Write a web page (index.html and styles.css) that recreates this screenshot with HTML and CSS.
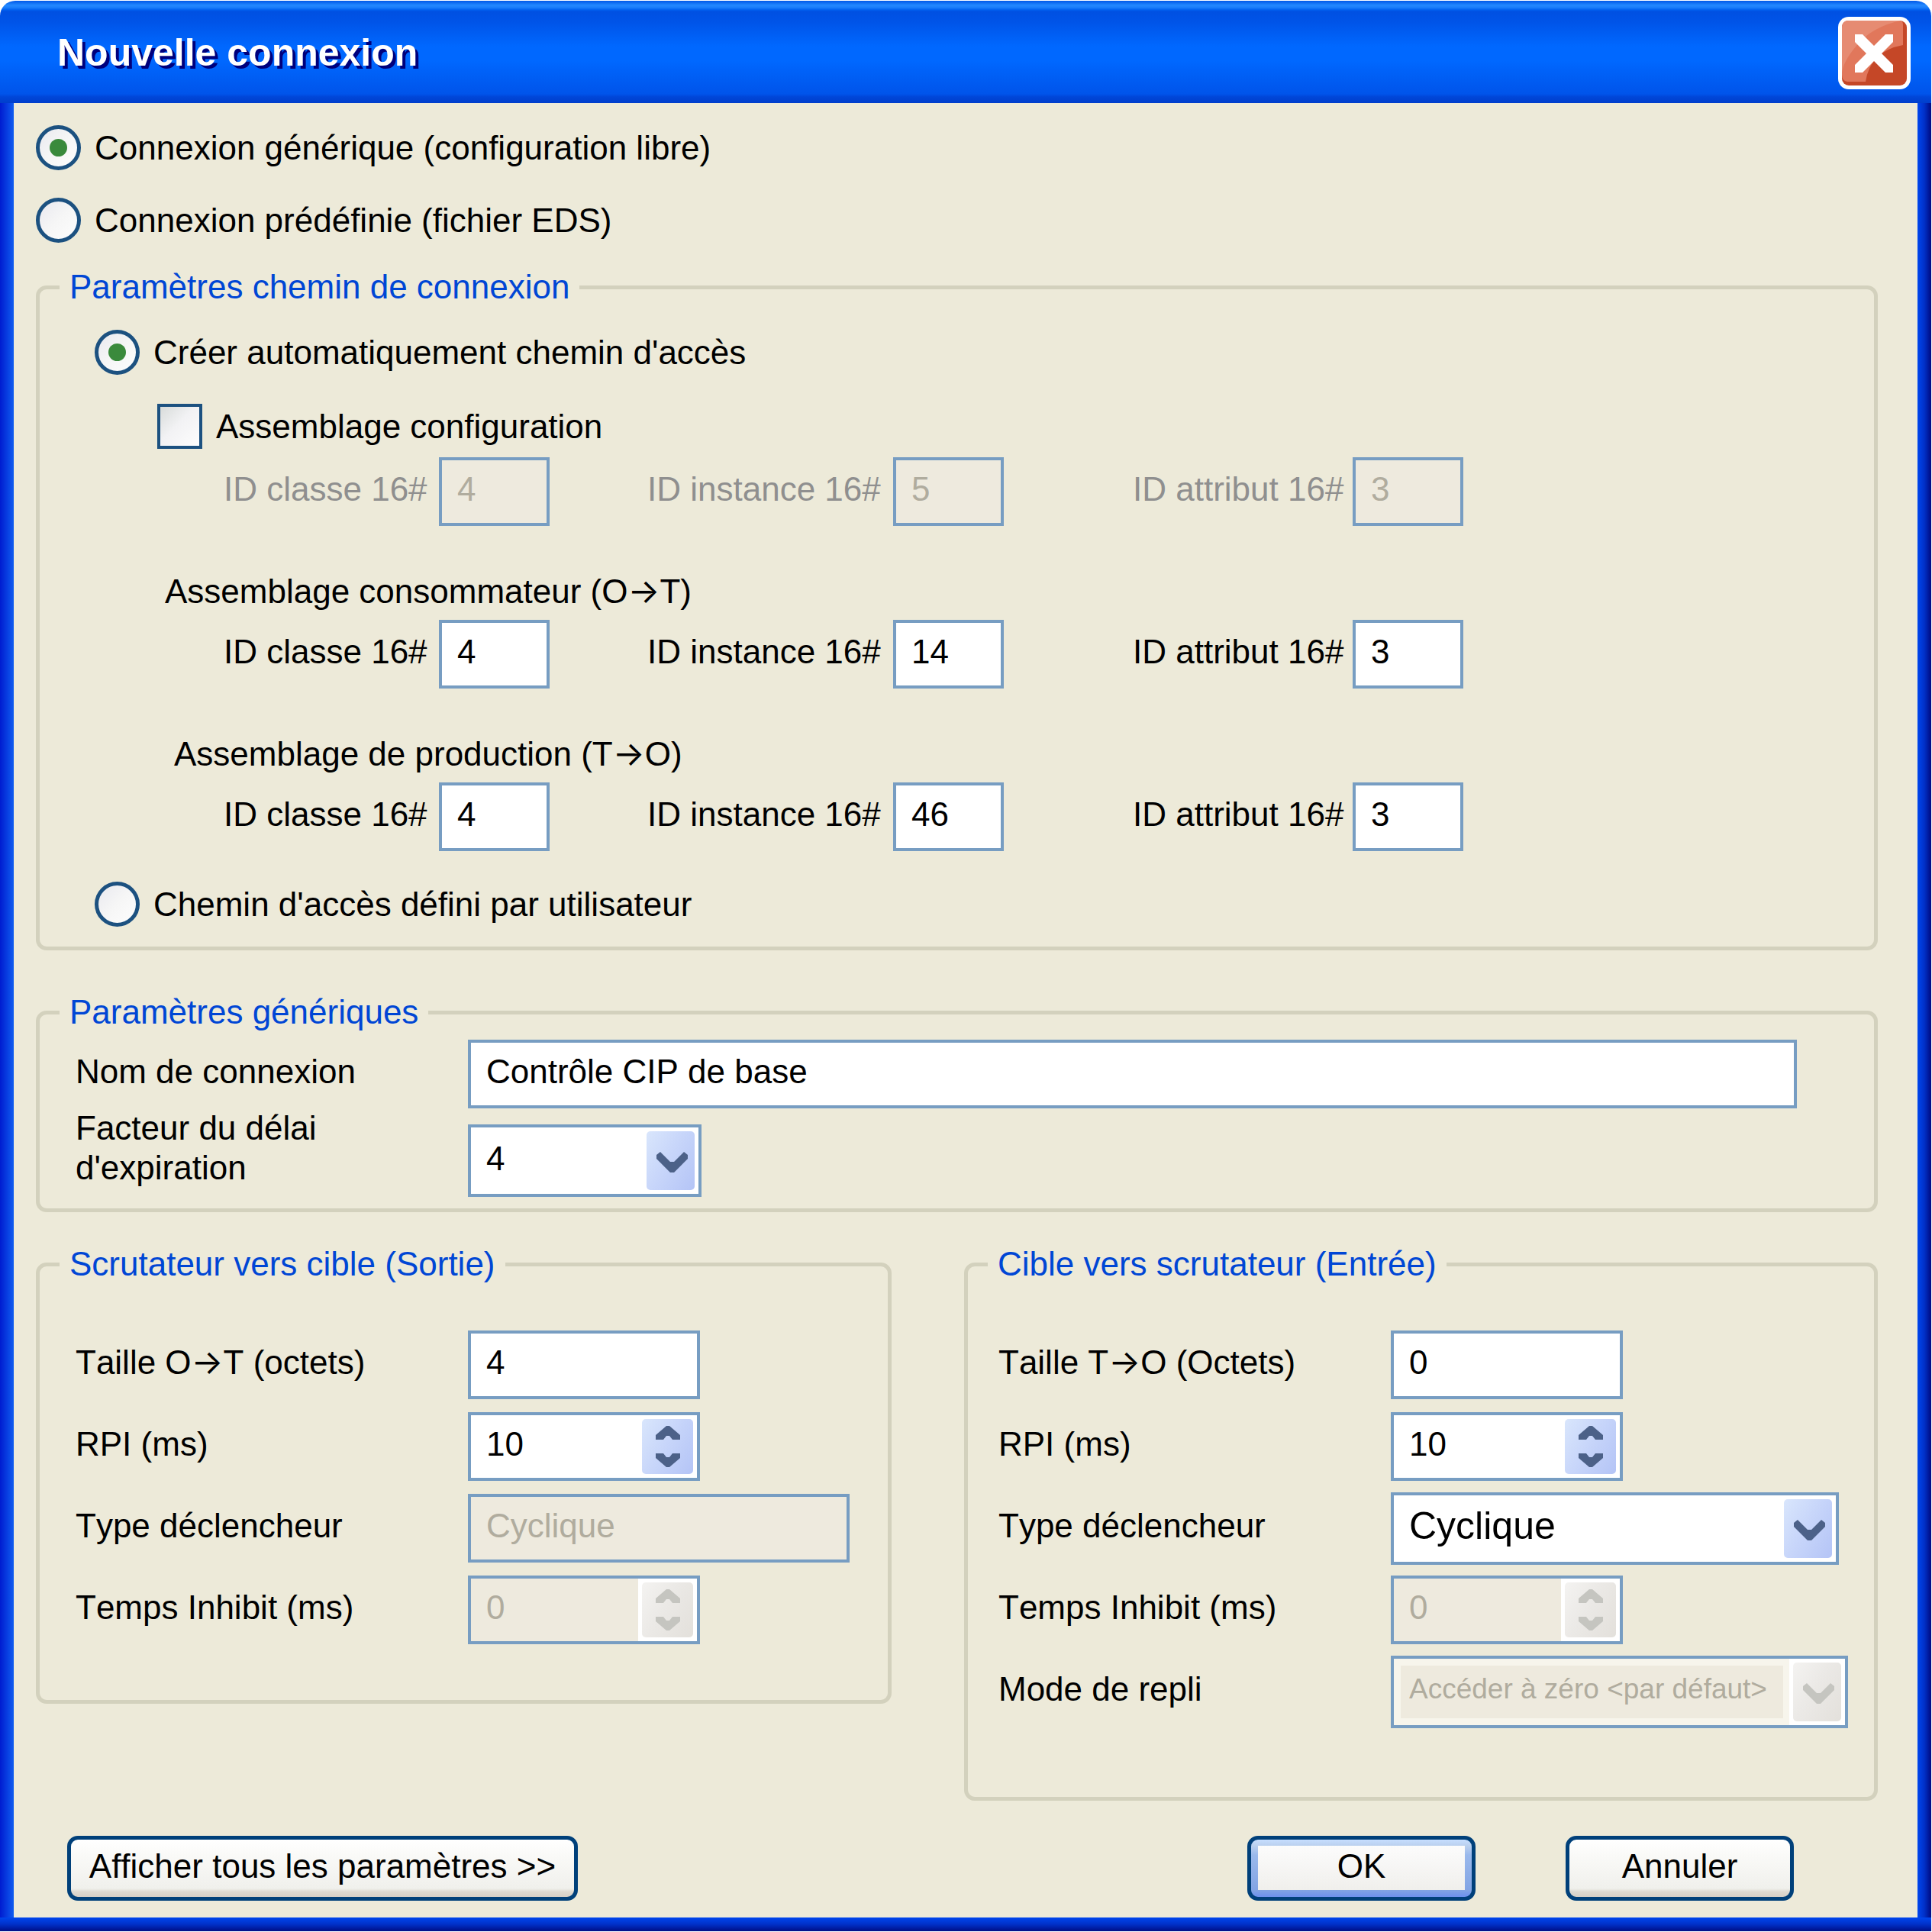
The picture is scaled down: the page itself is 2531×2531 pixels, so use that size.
FILE: index.html
```html
<!DOCTYPE html>
<html lang="fr">
<head>
<meta charset="utf-8">
<title>Nouvelle connexion</title>
<link rel="stylesheet" href="styles.css">
</head>
<body>
<svg class="defs" width="0" height="0" aria-hidden="true">
  <symbol id="chevron" viewBox="0 0 41 27"><path d="M0 4 L5 0 L18 13 H23 L36 0 L41 4 V9 L23 27 H18 L0 9 Z"/></symbol>
  <symbol id="chevron-small" viewBox="0 0 32 18"><path d="M0 0 H10 L14 5 H18 L22 0 H32 V6 L18 18 H14 L0 6 Z"/></symbol>
</svg>
<main class="window">
  <header class="titlebar">
    <h1 class="title">Nouvelle connexion</h1>
    <button class="close" type="button" aria-label="Fermer">
      <svg viewBox="0 0 95 95" width="95" height="95" aria-hidden="true">
        <rect width="95" height="95" rx="14" fill="#fff"/>
        <rect x="5" y="5" width="85" height="85" rx="9" fill="#c54727"/>
        <path d="M5 14 Q5 5 14 5 H80 Q85 5 85 10 V37 Q42 45 36 85 H12 Q5 84 5 76 Z" fill="#e1775b"/>
        <path d="M5 73 V14 Q5 5 14 5 H82 Q44 13 24 38 Q7 58 5 73 Z" fill="#e68b72"/>
        <path d="M22 23 H32 L47 38 L62 23 H72 V33 L57 48 L72 63 V73 H62 L47 58 L32 73 H22 V63 L37 48 L22 33 Z" fill="#fff"/>
      </svg>
    </button>
  </header>
  <form class="content">
    <div class="modes">
      <label class="option"><input class="radio" type="radio" name="mode" checked>Connexion générique (configuration libre)</label>
      <label class="option"><input class="radio" type="radio" name="mode">Connexion prédéfinie (fichier EDS)</label>
    </div>

    <fieldset class="group group-path">
      <legend class="legend">Paramètres chemin de connexion</legend>
      <label class="option option-path"><input class="radio" type="radio" name="path" checked>Créer automatiquement chemin d'accès</label>
      <label class="option option-assembly"><input class="checkbox" type="checkbox">Assemblage configuration</label>
      <div class="ids ids-disabled">
        <label class="label" for="cfg-class">ID classe 16#</label><input class="text" id="cfg-class" value="4" disabled>
        <label class="label" for="cfg-instance">ID instance 16#</label><input class="text" id="cfg-instance" value="5" disabled>
        <label class="label" for="cfg-attribute">ID attribut 16#</label><input class="text" id="cfg-attribute" value="3" disabled>
      </div>
      <h2 class="subtitle">Assemblage consommateur (O<span class="arrow">→</span>T)</h2>
      <div class="ids">
        <label class="label" for="ot-class">ID classe 16#</label><input class="text" id="ot-class" value="4">
        <label class="label" for="ot-instance">ID instance 16#</label><input class="text" id="ot-instance" value="14">
        <label class="label" for="ot-attribute">ID attribut 16#</label><input class="text" id="ot-attribute" value="3">
      </div>
      <h2 class="subtitle subtitle-production">Assemblage de production (T<span class="arrow">→</span>O)</h2>
      <div class="ids">
        <label class="label" for="to-class">ID classe 16#</label><input class="text" id="to-class" value="4">
        <label class="label" for="to-instance">ID instance 16#</label><input class="text" id="to-instance" value="46">
        <label class="label" for="to-attribute">ID attribut 16#</label><input class="text" id="to-attribute" value="3">
      </div>
      <label class="option option-user"><input class="radio" type="radio" name="path">Chemin d'accès défini par utilisateur</label>
    </fieldset>

    <fieldset class="group group-generic">
      <legend class="legend">Paramètres génériques</legend>
      <div class="generic">
        <label class="label" for="name">Nom de connexion</label>
        <input class="text" id="name" value="Contrôle CIP de base">
        <label class="label-double" for="timeout">Facteur du délai<br>d'expiration</label>
        <div class="combo combo-timeout">
          <select class="select" id="timeout"><option>4</option></select>
          <span class="panel"><span class="face"><svg class="icon" width="41" height="27" aria-hidden="true"><use href="#chevron"/></svg></span></span>
        </div>
      </div>
    </fieldset>

    <div class="directions">
      <fieldset class="group group-output">
        <legend class="legend">Scrutateur vers cible (Sortie)</legend>
        <div class="fields">
          <label class="label" for="out-size">Taille O<span class="arrow">→</span>T (octets)</label>
          <input class="text short" id="out-size" value="4">
          <label class="label" for="out-rpi">RPI (ms)</label>
          <div class="spinner short">
            <input class="number" id="out-rpi" type="number" value="10">
            <span class="panel"><span class="face">
              <button class="step step-up" type="button" aria-label="Augmenter"><svg width="32" height="18"><use href="#chevron-small"/></svg></button>
              <button class="step" type="button" aria-label="Diminuer"><svg width="32" height="18"><use href="#chevron-small"/></svg></button>
            </span></span>
          </div>
          <label class="label" for="out-trigger">Type déclencheur</label>
          <input class="text medium" id="out-trigger" value="Cyclique" disabled>
          <label class="label" for="out-inhibit">Temps Inhibit (ms)</label>
          <div class="spinner short is-disabled">
            <input class="number" id="out-inhibit" type="number" value="0" disabled>
            <span class="panel"><span class="face">
              <button class="step step-up" type="button" aria-label="Augmenter" disabled><svg width="32" height="18"><use href="#chevron-small"/></svg></button>
              <button class="step" type="button" aria-label="Diminuer" disabled><svg width="32" height="18"><use href="#chevron-small"/></svg></button>
            </span></span>
          </div>
        </div>
      </fieldset>

      <fieldset class="group group-input">
        <legend class="legend">Cible vers scrutateur (Entrée)</legend>
        <div class="fields">
          <label class="label" for="in-size">Taille T<span class="arrow">→</span>O (Octets)</label>
          <input class="text short" id="in-size" value="0">
          <label class="label" for="in-rpi">RPI (ms)</label>
          <div class="spinner short">
            <input class="number" id="in-rpi" type="number" value="10">
            <span class="panel"><span class="face">
              <button class="step step-up" type="button" aria-label="Augmenter"><svg width="32" height="18"><use href="#chevron-small"/></svg></button>
              <button class="step" type="button" aria-label="Diminuer"><svg width="32" height="18"><use href="#chevron-small"/></svg></button>
            </span></span>
          </div>
          <label class="label" for="in-trigger">Type déclencheur</label>
          <div class="combo combo-trigger">
            <select class="select" id="in-trigger"><option>Cyclique</option></select>
            <span class="panel"><span class="face"><svg class="icon" width="41" height="27" aria-hidden="true"><use href="#chevron"/></svg></span></span>
          </div>
          <label class="label" for="in-inhibit">Temps Inhibit (ms)</label>
          <div class="spinner short is-disabled">
            <input class="number" id="in-inhibit" type="number" value="0" disabled>
            <span class="panel"><span class="face">
              <button class="step step-up" type="button" aria-label="Augmenter" disabled><svg width="32" height="18"><use href="#chevron-small"/></svg></button>
              <button class="step" type="button" aria-label="Diminuer" disabled><svg width="32" height="18"><use href="#chevron-small"/></svg></button>
            </span></span>
          </div>
          <label class="label" for="in-fallback">Mode de repli</label>
          <div class="combo combo-fallback is-disabled">
            <select class="select" id="in-fallback" disabled><option>Accéder à zéro &lt;par défaut&gt;</option></select>
            <span class="panel"><span class="face"><svg class="icon" width="41" height="27" aria-hidden="true"><use href="#chevron"/></svg></span></span>
          </div>
        </div>
      </fieldset>
    </div>

    <footer class="actions">
      <button class="button button-all" type="button">Afficher tous les paramètres &gt;&gt;</button>
      <button class="button button-default" type="submit">OK</button>
      <button class="button" type="button">Annuler</button>
    </footer>
  </form>
</main>
</body>
</html>
```

FILE: styles.css
```css
* { box-sizing: border-box; }

body {
  margin: 0;
  padding: 1px 1px 1px 0;
  background: #fff;
  color: #000;
  font: 44px/50px "Liberation Sans", Arial, sans-serif;
  font-kerning: none;
}

input, select, button { font: inherit; font-kerning: none; color: inherit; margin: 0; }

.defs { display: block; }

/* Window frame */
.titlebar {
  display: flex;
  align-items: center;
  justify-content: space-between;
  height: 134px;
  padding: 2px 27px 0 75px;
  border-radius: 20px 20px 0 0;
  background: linear-gradient(#0058e8 0, #2389ff 6px, #1a7dfa 9px, #0060f0 12px, #0050e2 14px, #0054e8 28px, #0068ff 60px, #0068ff 78px, #0054ea 122px, #0046d8 126px, #003ecc 134px);
}

.title {
  margin: 0;
  color: #fff;
  font-size: 50px;
  font-weight: bold;
  text-shadow: 4px 4px 0 #00007c;
}

.close { padding: 0; border: 0; background: none; line-height: 0; }

.content {
  padding: 29px 70px 40px 47px;
  background:
    linear-gradient(#0046ee, #0030c8 9px, #000f86) 0 100% / 100% 18px no-repeat,
    linear-gradient(90deg, #001cd0, #0f5cf0) 0 0 / 18px 100% no-repeat,
    linear-gradient(270deg, #000a80, #0030c8 9px, #0046ee) 100% 0 / 18px 100% no-repeat,
    #edead9;
}

/* Radio buttons and tick boxes */
.modes { display: flex; flex-direction: column; gap: 36px; margin-bottom: 33px; }
.option { display: flex; align-items: center; gap: 18px; }

.radio, .checkbox {
  appearance: none;
  display: grid;
  place-content: center;
  flex: none;
  width: 59px;
  height: 59px;
  border: 4px solid #1c5180;
  background: linear-gradient(135deg, #e9e9ef, #f6f6f6 50%, #fdfdfd);
}
.radio { border-radius: 50%; border-width: 5px; }
.radio:checked::before { content: ""; width: 23px; height: 23px; border-radius: 50%; background: #3a8a3c; }
.checkbox { background: linear-gradient(135deg, #d8dbda, #f2f2f4 45%, #fdfdfd); }

/* Groups */
.group {
  min-width: 0;
  margin: 0;
  padding: 0 26px;
  border: 5px solid #d3d1bd;
  border-radius: 14px;
}
.legend { padding: 0 13px; color: #0046d5; }

.group-path { padding-top: 31px; padding-bottom: 26px; margin-bottom: 56px; }
.option-path, .option-user { margin-left: 46px; }
.option-assembly { margin: 38px 0 11px 128px; }
.option-user { margin-top: 40px; }

.ids {
  display: grid;
  grid-template-columns: 282px 273px 322px 314px 288px 145px;
  margin-left: 215px;
}
.ids .text { width: 145px; }
.ids-disabled { color: #8f8f8f; }
.subtitle { margin: 61px 0 12px 138px; font: inherit; }
.subtitle-production { margin-left: 150px; }
.arrow { font: 44px/1px Inter, "DejaVu Sans", sans-serif; }

/* Fields */
.label { align-self: center; padding-bottom: 6px; }

.text, .spinner {
  width: 100%;
  height: 90px;
  border: 4px solid #779dc2;
  border-radius: 0;
  background: #fff;
}
.text { padding: 0 20px 6px; }
.text:disabled, .number:disabled { background: #eeeade; color: #b0ac9e; }

.short { width: 304px; }
.medium { width: 500px; }

.spinner { display: flex; }
.spinner.short { width: 304px; }
.number {
  appearance: textfield;
  flex: 1;
  min-width: 0;
  padding: 0 20px 6px;
  border: 0;
  border-radius: 0;
  background: #fff;
}
.number::-webkit-inner-spin-button { appearance: none; margin: 0; }

.panel { display: grid; width: 73px; padding: 5px; background: #fff; }
.spinner .panel { width: 77px; }
.face {
  display: flex;
  flex-direction: column;
  align-items: center;
  justify-content: center;
  gap: 18px;
  border-radius: 5px;
  background: linear-gradient(120deg, #d9e6fc, #c8d6fa 45%, #b4c4f6);
  fill: #4c6188;
}
.is-disabled .face { background: linear-gradient(120deg, #f4f3f1, #ebe9e6 45%, #e3e0db); fill: #c5c5c0; }
.step { padding: 0; border: 0; background: none; height: 18px; line-height: 0; }
.step-up svg { transform: rotate(180deg); }
.icon { margin: 4px 0 0 4px; }

.combo { display: grid; grid-template-columns: 1fr auto; height: 95px; border: 4px solid #779dc2; }
.select {
  appearance: none;
  grid-area: 1 / 1 / 2 / 3;
  width: 100%;
  padding: 0 20px 6px;
  border: 0;
  border-radius: 0;
  background: #fff;
  line-height: 64px;
}
.select:disabled {
  color: #b0ac9e;
  opacity: 1;
  background: linear-gradient(#eeeade, #eeeade) 9px 9px / calc(100% - 90px) calc(100% - 18px) no-repeat #f7f5ec;
}
.combo .panel { grid-area: 1 / 2; pointer-events: none; }

/* Generic parameters */
.group-generic { padding-top: 11px; padding-bottom: 15px; margin-bottom: 43px; }
.generic {
  display: grid;
  grid-template-columns: 514px 1fr;
  padding: 0 75px 0 21px;
}
.label-double { line-height: 52px; }
.combo-timeout { width: 306px; margin-top: 21px; }

/* Scanner / target directions */
.directions {
  display: grid;
  grid-template-columns: 1121fr 1197fr;
  gap: 95px;
  align-items: start;
  margin-bottom: 46px;
}
.group-output { padding-top: 62px; padding-bottom: 73px; }
.group-input { padding-top: 62px; padding-bottom: 93px; padding-right: 0; }
.fields {
  display: grid;
  grid-template-columns: 514px 1fr;
  grid-auto-rows: 90px;
  row-gap: 17px;
  align-items: center;
  padding-left: 21px;
}
.group-input .fields { padding-left: 14px; }
.combo-trigger { width: 587px; font-size: 50px; }
.combo-fallback { width: 599px; font-size: 37px; }

/* Actions */
.actions { display: flex; padding: 0 110px 0 41px; }
.button {
  width: 299px;
  height: 85px;
  padding: 0 0 6px;
  border: 5px solid #00407a;
  border-radius: 14px;
  background: linear-gradient(#fff 0, #fafaf8 20px, #f0f0ec 64px, #dedad2 68px, #d6cfc5 75px);
}
.button-all { width: 669px; margin-right: auto; }
.button-default {
  margin-right: 118px;
  background:
    linear-gradient(#fcfcfc, #f0efec) 9px 8px / calc(100% - 18px) 58px no-repeat,
    linear-gradient(#c6deff, #bad0ee 8px, #9ab9ec 20px, #82a4e4 66px, #6d90ee 75px);
}
```
